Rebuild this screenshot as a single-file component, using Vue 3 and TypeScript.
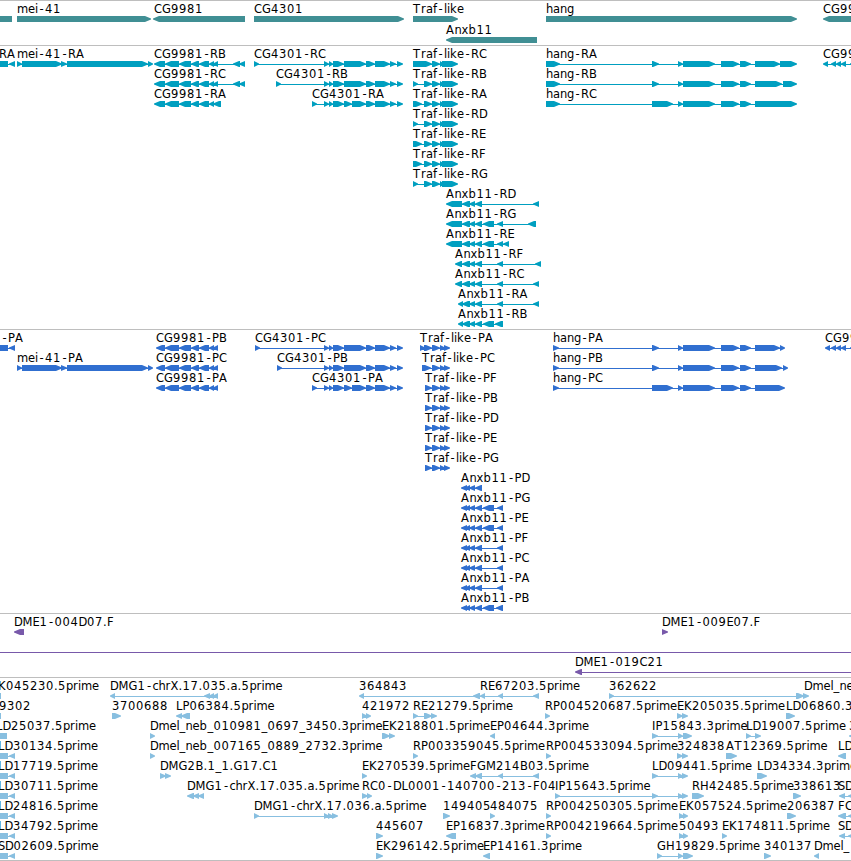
<template>
  <main class="browser">
    <section v-for="track in tracks" :key="track.name" class="track" :class="track.name">
      <svg :width="WIDTH" :height="track.height" :viewBox="`0 1 ${WIDTH} ${track.height}`">
        <g v-for="(f, i) in track.features" :key="i" :transform="`translate(0 ${f.row * track.step})`">
          <path v-if="f.spans.length" :d="intron(f) + exons(f)" />
          <text v-if="f.label" :x="glyphs(f)" y="13">{{ f.label }}</text>
        </g>
      </svg>
    </section>
  </main>
</template>

<script setup lang="ts">
type Span = [number, number]

interface Feature {
  row: number
  label: string
  x: number
  dir: 1 | -1
  spans: Span[]
}

interface Track {
  name: string
  height: number
  step: number
  features: Feature[]
}

const WIDTH = 851

// advance width of every character in a label, digits are 8
const advances: Record<string, number> = {
  A: 8.5, B: 8, C: 8, D: 8.5, E: 7, F: 7, G: 9, H: 9, I: 3.5, K: 8, L: 6.5, M: 10, P: 7, R: 8, S: 7, T: 8, X: 8,
  a: 7, b: 8, c: 6, e: 7, f: 4, g: 7, h: 7, i: 3, k: 7, l: 3, m: 11, n: 7, p: 7, r: 5, x: 7,
  '-': 7, _: 6, '.': 4
}

function glyphs(f: Feature) {
  let x = f.x
  return [...f.label].map((c) => {
    // hyphens sit in the middle of their slot
    const at = c === '-' ? x + 1.5 : x
    x += advances[c] ?? 8
    return at
  }).join(' ')
}

function intron(f: Feature) {
  const from = f.spans[0][0] + 1
  const to = f.spans[f.spans.length - 1][1] - 1
  return `M${from} 19H${to}V20H${from}Z`
}

function exons(f: Feature) {
  return f.spans.map(([a, b]) => {
    const head = Math.min(6, b - a)
    // both directions wind clockwise so they never cancel the intron
    return f.dir === 1
      ? `M${a} 16H${b - head}L${b} 18.5V19.5L${b - head} 22H${a}Z`
      : `M${a + head} 16H${b}V22H${a + head}L${a} 19.5V18.5Z`
  }).join('')
}

function fwd(row: number, label: string, x: number, ...spans: Span[]): Feature {
  return { row, label, x, dir: 1, spans }
}

function rev(row: number, label: string, x: number, ...spans: Span[]): Feature {
  return { row, label, x, dir: -1, spans }
}

// exon groups shared between isoforms
const mei: Span[] = [[17, 22], [22, 62], [61, 67], [67, 148], [148, 153]]
const cg9981: Span[] = [[165, 179], [179, 191], [191, 199], [199, 209], [209, 214]]
const cg9981Long: Span[] = [[154, 165], ...cg9981, [213, 218], [233, 240], [239, 245]]
const cg4301: Span[] = [[324, 329], [329, 333], [333, 344], [344, 366], [366, 375], [375, 390], [390, 396], [397, 403]]
const cg4301Split: Span[] = [[324, 329], [329, 333], [333, 344], [344, 352], [352, 366], [366, 375], [375, 390], [390, 396], [397, 403]]
const trafTail: Span[] = [[424, 432], [432, 440], [440, 444], [442, 458]]
const trafCds: Span[] = [[432, 440], [440, 445], [444, 450]]
const anx: Span[] = [[462, 470], [469, 475], [475, 482]]
const anxCds: Span[] = [[461, 467], [465, 470], [469, 475], [475, 482]]
const hangMid: Span[] = [[678, 683], [683, 715], [721, 739], [740, 751]]
const nextGene: Span[] = [[831, 836], [836, 841], [841, 846], [850, 860]]
const edge: Span[] = [[-12, 8], [9, 15]]

const tracks: Track[] = [
  {
    name: 'gene',
    height: 44,
    step: 21,
    features: [
      rev(0, '', 0, [-20, 12]),
      fwd(0, 'mei-41', 17, [17, 151]),
      rev(0, 'CG9981', 154, [153, 245]),
      fwd(0, 'CG4301', 254, [254, 404]),
      fwd(0, 'Traf-like', 413, [413, 458]),
      rev(1, 'Anxb11', 446, [446, 537]),
      fwd(0, 'hang', 546, [546, 797]),
      rev(0, 'CG9903', 823, [823, 870])
    ]
  },
  {
    name: 'transcript',
    height: 283,
    step: 20,
    features: [
      rev(0, 'RA', -1, ...edge),
      fwd(0, 'mei-41-RA', 17, ...mei),
      rev(0, 'CG9981-RB', 154, ...cg9981Long),
      rev(1, 'CG9981-RC', 154, ...cg9981Long),
      rev(2, 'CG9981-RA', 154, [154, 165], ...cg9981, [213, 221]),
      fwd(0, 'CG4301-RC', 254, [254, 259], ...cg4301),
      fwd(1, 'CG4301-RB', 276, [276, 281], ...cg4301),
      fwd(2, 'CG4301-RA', 312, [312, 317], ...cg4301Split),
      fwd(0, 'Traf-like-RC', 413, [413, 432], ...trafTail.slice(1)),
      fwd(1, 'Traf-like-RB', 413, [413, 418], ...trafTail),
      fwd(2, 'Traf-like-RA', 413, [413, 422], ...trafTail),
      fwd(3, 'Traf-like-RD', 413, [413, 418], ...trafTail),
      fwd(4, 'Traf-like-RE', 413, [413, 422], ...trafTail),
      fwd(5, 'Traf-like-RF', 413, [413, 422], ...trafTail),
      fwd(6, 'Traf-like-RG', 413, [413, 418], ...trafTail),
      rev(7, 'Anxb11-RD', 446, [446, 462], ...anx, [533, 539]),
      rev(8, 'Anxb11-RG', 446, [446, 462], ...anx, [483, 494], [497, 503], [528, 536]),
      rev(9, 'Anxb11-RE', 446, [446, 462], ...anx, [483, 494], [497, 503], [503, 509]),
      rev(10, 'Anxb11-RF', 455, [455, 462], ...anx, [497, 503], [535, 541]),
      rev(11, 'Anxb11-RC', 455, [455, 462], ...anx, [497, 503], [533, 539]),
      rev(12, 'Anxb11-RA', 458, [458, 463], ...anx, [497, 503], [533, 539]),
      rev(13, 'Anxb11-RB', 458, [458, 463], ...anx, [483, 494], [495, 503]),
      fwd(0, 'hang-RA', 546, [546, 560], [652, 659], ...hangMid, [755, 780], [780, 797]),
      fwd(1, 'hang-RB', 546, [546, 560], [652, 659], ...hangMid, [755, 782], [783, 797]),
      fwd(2, 'hang-RC', 546, [546, 560], [652, 673], ...hangMid, [755, 797]),
      rev(0, 'CG9903-RA', 823, [823, 828], ...nextGene)
    ]
  },
  {
    name: 'cds',
    height: 283,
    step: 20,
    features: [
      rev(0, '-PA', 1, ...edge),
      fwd(1, 'mei-41-PA', 17, ...mei),
      rev(0, 'CG9981-PB', 156, [156, 165], ...cg9981, [213, 218]),
      rev(1, 'CG9981-PC', 156, [156, 165], ...cg9981, [213, 218]),
      rev(2, 'CG9981-PA', 156, [156, 165], ...cg9981, [213, 218]),
      fwd(0, 'CG4301-PC', 255, [255, 260], ...cg4301),
      fwd(1, 'CG4301-PB', 277, [277, 282], ...cg4301),
      fwd(2, 'CG4301-PA', 312, [312, 317], ...cg4301Split),
      fwd(0, 'Traf-like-PA', 420, [420, 425], [424, 432], ...trafCds),
      fwd(1, 'Traf-like-PC', 422, [422, 431], ...trafCds),
      fwd(2, 'Traf-like-PF', 425, [425, 432], ...trafCds),
      fwd(3, 'Traf-like-PB', 425, [425, 432], ...trafCds),
      fwd(4, 'Traf-like-PD', 425, [425, 432], ...trafCds),
      fwd(5, 'Traf-like-PE', 425, [425, 432], ...trafCds),
      fwd(6, 'Traf-like-PG', 425, [425, 432], ...trafCds),
      rev(7, 'Anxb11-PD', 461, ...anxCds),
      rev(8, 'Anxb11-PG', 461, ...anxCds, [483, 494], [497, 503]),
      rev(9, 'Anxb11-PE', 461, ...anxCds, [483, 494], [497, 503]),
      rev(10, 'Anxb11-PF', 461, ...anxCds, [497, 503]),
      rev(11, 'Anxb11-PC', 461, ...anxCds, [497, 503]),
      rev(12, 'Anxb11-PA', 461, ...anxCds, [497, 503]),
      rev(13, 'Anxb11-PB', 461, ...anxCds, [483, 494], [496, 503]),
      fwd(0, 'hang-PA', 553, [553, 559], [652, 659], ...hangMid, [755, 780], [780, 785]),
      fwd(1, 'hang-PB', 553, [553, 559], [652, 659], ...hangMid, [755, 782], [783, 788]),
      fwd(2, 'hang-PC', 553, [553, 559], [652, 673], ...hangMid, [755, 785]),
      rev(0, 'CG9903-PA', 825, [825, 830], ...nextGene)
    ]
  },
  {
    name: 'bac',
    height: 63,
    step: 20,
    features: [
      rev(0, 'DME1-004D07.F', 14, [14, 24]),
      fwd(0, 'DME1-009E07.F', 662, [662, 668]),
      fwd(1, '', 0, [-20, -10], [860, 870]),
      rev(2, 'DME1-019C21', 575, [575, 582], [860, 870])
    ]
  },
  {
    name: 'est',
    height: 182,
    step: 20,
    features: [
      rev(0, 'K045230.5prime', -2, [-9, 1]),
      rev(0, 'DMG1-chrX.17.035.a.5prime', 110, [110, 115], [204, 210], [209, 214], [213, 218]),
      rev(0, '364843', 359, [359, 364], [473, 480]),
      rev(0, 'RE67203.5prime', 480, [475, 480], [480, 485], [498, 503], [533, 539]),
      fwd(0, '362622', 609, [609, 614], [796, 804], [803, 809]),
      fwd(0, 'Dmel_neb', 804),

      rev(1, '9302', -1, [-9, 1]),
      fwd(1, '3700688', 112, [112, 121]),
      rev(1, 'LP06384.5prime', 176, [176, 182], [181, 190]),
      fwd(1, '421972', 362, [362, 367], [366, 371]),
      fwd(1, 'RE21279.5prime', 413, [413, 418], [424, 432], [431, 437]),
      fwd(1, 'RP004520687.5prime', 545, [545, 550]),
      fwd(1, 'EK205035.5prime', 677, [677, 683], [682, 688]),
      fwd(1, 'LD06860.3prime', 786, [786, 795]),

      rev(2, 'LD25037.5prime', -4, [-9, 7]),
      fwd(2, 'Dmel_neb_010981_0697_3450.3prime', 150, [150, 155]),
      fwd(2, 'EK218801.5prime', 382, [382, 390], [389, 395]),
      rev(2, 'EP04644.3prime', 490, [490, 495]),
      fwd(2, 'IP15843.3prime', 652, [652, 658], [678, 683], [683, 692]),
      fwd(2, 'LD19007.5prime', 746, [746, 751], [755, 761]),
      rev(2, '3', 849, [849, 860]),

      rev(3, 'LD30134.5prime', -2, ...edge),
      fwd(3, 'Dmel_neb_007165_0889_2732.3prime', 150, [150, 155]),
      fwd(3, 'RP003359045.5prime', 413, [413, 418]),
      fwd(3, 'RP004533094.5prime', 546, [546, 551]),
      fwd(3, '324838', 677, [677, 683], [682, 688]),
      fwd(3, 'AT12369.5prime', 726, [726, 737]),
      rev(3, 'LD', 838, [838, 846]),

      rev(4, 'LD17719.5prime', -2, ...edge),
      fwd(4, 'DMG2B.1_1.G17.C1', 160, [160, 166], [165, 171]),
      fwd(4, 'EK270539.5prime', 362, [362, 367]),
      rev(4, 'FGM214B03.5prime', 470, [470, 476], [475, 482], [498, 503], [533, 539]),
      fwd(4, 'LD09441.5prime', 652, [652, 658], [678, 683], [682, 688]),
      fwd(4, 'LD34334.3prime', 757, [757, 767]),

      rev(5, 'LD30711.5prime', -2, ...edge),
      rev(5, 'DMG1-chrX.17.035.a.5prime', 187, [187, 194], [193, 199], [198, 204]),
      fwd(5, 'RC0-DL0001-140700-213-F04', 362, [362, 368], [367, 372]),
      fwd(5, 'IP15643.5prime', 555, [555, 560], [652, 658], [678, 683], [682, 688]),
      fwd(5, 'RH42485.5prime', 692, [692, 704]),
      fwd(5, '338613', 793, [793, 801]),
      rev(5, 'SD', 838, [839, 845], [848, 860]),

      rev(6, 'LD24816.5prime', -2, ...edge),
      fwd(6, 'DMG1-chrX.17.036.a.5prime', 254, [254, 259], [324, 329], [328, 333], [332, 338]),
      fwd(6, '149405', 443, [443, 450]),
      fwd(6, '484075', 490, [490, 495]),
      fwd(6, 'RP004250305.5prime', 546, [546, 551]),
      fwd(6, 'EK057524.5prime', 679, [679, 684], [683, 688]),
      fwd(6, '206387', 787, [787, 796]),
      rev(6, 'FC', 838, [838, 846], [848, 860]),

      rev(7, 'LD34792.5prime', -2, ...edge),
      fwd(7, '445607', 376, [376, 383]),
      rev(7, 'EP16837.3prime', 446, [446, 456]),
      fwd(7, 'RP004219664.5prime', 546, [546, 551]),
      fwd(7, '50493', 679, [679, 684], [683, 688]),
      fwd(7, 'EK174811.5prime', 722, [722, 727]),
      rev(7, 'SD', 838, [839, 845], [848, 860]),

      rev(8, 'SD02609.5prime', -2, ...edge),
      fwd(8, 'EK296142.5prime', 376, [376, 383]),
      rev(8, 'EP14161.3prime', 483, [483, 490]),
      fwd(8, 'GH19829.5prime', 657, [657, 662], [678, 683], [683, 693]),
      fwd(8, '340137', 764, [764, 771]),
      rev(8, 'Dmel_', 814, [814, 819])
    ]
  }
]
</script>

<style>
body {
  background: #fff;
}
</style>

<style scoped>
.browser {
  display: flex;
  flex-direction: column;
  width: 851px;
  overflow: hidden;
  border-bottom: 1px solid #bebebe;
}
.track {
  border-top: 1px solid #bebebe;
}
.track svg {
  display: block;
  overflow: hidden;
}
.gene path {
  fill: #408f94;
}
.transcript path {
  fill: #009fc0;
}
.cds path {
  fill: #306fd0;
}
.bac path {
  fill: #7859aa;
}
.est path {
  fill: #88bfe0;
}
.track text {
  fill: #000;
  font-family: "DejaVu Sans", sans-serif;
  font-size: 11.5px;
}
</style>
